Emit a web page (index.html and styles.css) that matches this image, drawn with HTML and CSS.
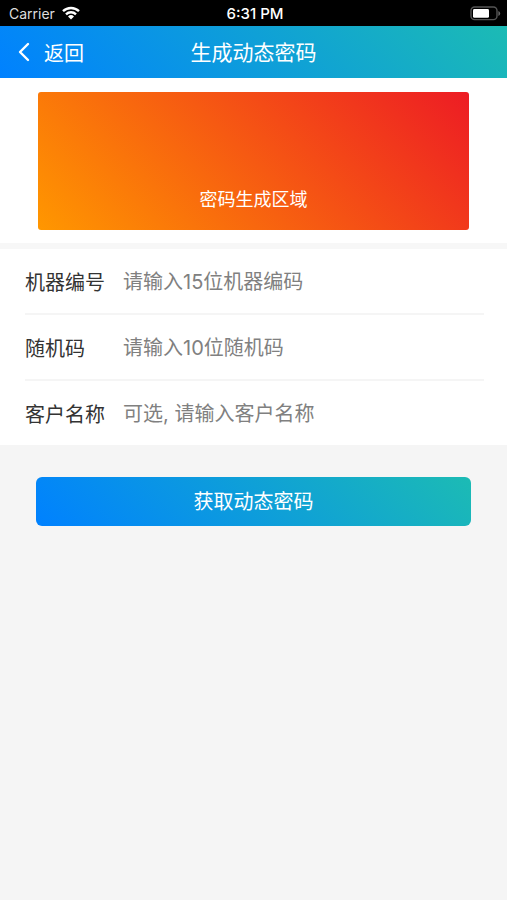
FILE: index.html
```html
<!DOCTYPE html>
<html lang="zh-CN">
<head>
<meta charset="utf-8">
<meta name="viewport" content="width=device-width, initial-scale=1">
<title>生成动态密码</title>
<link rel="stylesheet" href="styles.css">
</head>
<body>
<div class="status">
  <div class="carrier">
    <span>Carrier</span>
    <svg class="wifi" width="20" height="14" viewBox="0 0 20 14" aria-hidden="true">
      <path d="M2 5.2a11.6 11.6 0 0 1 16 0" />
      <path d="M5 8.3a7.2 7.2 0 0 1 10 0" />
      <path class="dot" d="M7 10.5a4.4 4.4 0 0 1 6 0L10 13.6z" />
    </svg>
  </div>
  <span class="time">6:31 PM</span>
  <svg class="battery" width="31" height="15" viewBox="0 0 31 15" aria-hidden="true">
    <rect class="case" x="1" y="1" width="26" height="12.6" rx="3.6" />
    <rect class="charge" x="3" y="3" width="16" height="8.8" rx="1.4" />
    <path class="tip" d="M28.4 5v5q1.8-.8 1.8-2.5T28.4 5z" />
  </svg>
</div>
<header class="bar">
  <a class="back" href="#">
    <svg width="12" height="20" viewBox="0 0 12 20" aria-hidden="true"><path d="M10 2L2 10l8 8" /></svg>
    <span>返回</span>
  </a>
  <h1 class="title">生成动态密码</h1>
</header>
<main>
  <section class="result">
    <div class="card">密码生成区域</div>
  </section>
  <form>
    <div class="fields">
      <div class="row">
        <label for="machine">机器编号</label>
        <input id="machine" type="text" placeholder="请输入15位机器编码">
      </div>
      <div class="row">
        <label for="random">随机码</label>
        <input id="random" type="text" placeholder="请输入10位随机码">
      </div>
      <div class="row">
        <label for="customer">客户名称</label>
        <input id="customer" type="text" placeholder="可选, 请输入客户名称">
      </div>
    </div>
    <button class="submit" type="button">获取动态密码</button>
  </form>
</main>
</body>
</html>
```
FILE: styles.css
```css
* {
  box-sizing: border-box;
}

body {
  margin: 0;
  min-height: 100vh;
  background: #f5f5f5;
  color: #333;
  font-family: Inter, "Noto Sans CJK SC", sans-serif;
  font-size: 20px;
}

.status {
  display: grid;
  grid-template-columns: 1fr auto 1fr;
  align-items: center;
  height: 26px;
  padding: 0 6px 0 9px;
  background: #000;
  color: #fff;
  font-size: 14px;
}

.carrier {
  display: flex;
  align-items: center;
  gap: 6px;
  color: #ddd;
}

.wifi {
  fill: none;
  stroke: #fff;
  stroke-width: 2.4;
}

.wifi .dot {
  fill: #fff;
  stroke: none;
}

.time {
  font-size: 15px;
  font-weight: 500;
}

.battery {
  justify-self: end;
}

.case {
  fill: none;
  stroke: #555;
  stroke-width: 1.4;
}

.charge {
  fill: #fff;
}

.tip {
  fill: #666;
}

.bar {
  display: grid;
  grid-template-columns: 1fr auto 1fr;
  align-items: center;
  height: 52px;
  padding: 0 18px;
  background: linear-gradient(45deg, #0081ff, #1cbbb4);
  color: #fff;
}

.back {
  display: flex;
  align-items: center;
  gap: 14px;
  color: inherit;
  text-decoration: none;
}

.back svg {
  fill: none;
  stroke: #fff;
  stroke-width: 2.4;
  stroke-linecap: round;
  stroke-linejoin: round;
}

.title {
  margin: 0;
  padding-bottom: 2px;
  font-size: 21px;
  font-weight: 400;
}

.result {
  padding: 14px 38px 13px;
  background: #fff;
  border-bottom: 6px solid #f7f7f7;
}

.card {
  display: flex;
  align-items: flex-end;
  justify-content: center;
  height: 138px;
  padding-bottom: 19px;
  border-radius: 3px;
  background: linear-gradient(45deg, #ff9700, #ed1c24);
  color: #fff;
  font-size: 18px;
}

.fields {
  padding: 0 23px 0 25px;
  background: #fff;
}

.row {
  display: flex;
  align-items: center;
  height: 66px;
  border-bottom: 2px solid #f5f5f5;
}

.row:last-child {
  height: 64px;
  border-bottom: 0;
}

.row label {
  flex: 0 0 98px;
}

.row input {
  flex: 1;
  height: 32px;
  min-width: 0;
  padding: 2px 0 0;
  border: 0;
  outline: 0;
  background: none;
  color: inherit;
  font: inherit;
}

.row input::placeholder {
  color: #808080;
  opacity: 1;
}

.submit {
  display: block;
  width: calc(100% - 72px);
  height: 49px;
  margin: 32px auto 0;
  padding: 0 0 2px;
  border: 0;
  border-radius: 6px;
  background: linear-gradient(45deg, #0081ff, #1cbbb4);
  color: #fff;
  font: inherit;
}
```
